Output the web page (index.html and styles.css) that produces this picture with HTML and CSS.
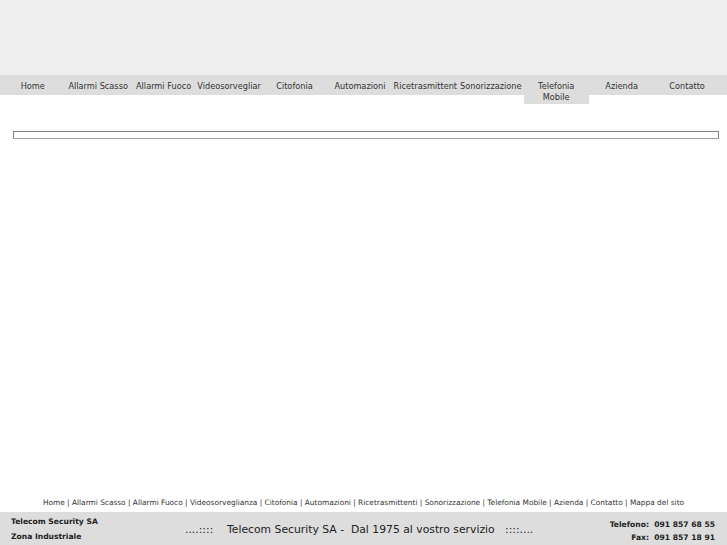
FILE: index.html
```html
<!DOCTYPE html>
<html lang="it">
<head>
  <meta charset="UTF-8">
  <title>Telecom Security SA</title>
  <link rel="stylesheet" href="styles.css">
</head>
<body>
  <div class="page">
    <div class="top"></div>

    <div class="menu-bar">
      <ul class="menu">
        <li><a href="#">Home</a></li>
        <li><a href="#">Allarmi Scasso</a></li>
        <li><a href="#">Allarmi Fuoco</a></li>
        <li><a href="#">Videosorvegliar</a></li>
        <li><a href="#">Citofonia</a></li>
        <li><a href="#">Automazioni</a></li>
        <li><a href="#">Ricetrasmittent</a></li>
        <li><a href="#">Sonorizzazione</a></li>
        <li class="active"><a href="#">Telefonia Mobile</a></li>
        <li><a href="#">Azienda</a></li>
        <li><a href="#">Contatto</a></li>
      </ul>
    </div>

    <div class="content">
      <div class="frame"></div>
    </div>

    <div class="links">
      <a href="#">Home</a> | <a href="#">Allarmi Scasso</a> | <a href="#">Allarmi Fuoco</a> | <a href="#">Videosorveglianza</a> | <a href="#">Citofonia</a> | <a href="#">Automazioni</a> | <a href="#">Ricetrasmittenti</a> | <a href="#">Sonorizzazione</a> | <a href="#">Telefonia Mobile</a> | <a href="#">Azienda</a> | <a href="#">Contatto</a> | <a href="#">Mappa del sito</a>
    </div>

    <div class="footer">
      <div class="address">
        <div>Telecom Security SA</div>
        <div>Zona Industriale</div>
      </div>
      <div class="slogan">....::::&nbsp;&nbsp;&nbsp; Telecom Security SA -&nbsp; Dal 1975 al vostro servizio &nbsp;&nbsp;::::....</div>
      <div class="phones">
        <div>Telefono:&nbsp; 091 857 68 55</div>
        <div>Fax:&nbsp; 091 857 18 91</div>
      </div>
    </div>
  </div>
</body>
</html>
```

FILE: styles.css
```css
body {
  margin: 0;
  font-family: 'DejaVu Sans', Verdana, sans-serif;
  background: #fff;
  color: #333;
}

a {
  color: #333;
  text-decoration: none;
}

.page {
  display: flex;
  flex-direction: column;
  min-height: 545px;
}

.top {
  height: 75px;
  background: #efefef;
}

.menu-bar {
  height: 20px;
  background: #dddddd;
}

.menu {
  display: grid;
  grid-template-columns: repeat(11, 65.45px);
  align-items: start;
  margin: 0;
  padding: 0;
  list-style: none;
  font-size: 8.2px;
}

.menu li {
  overflow: hidden;
  white-space: nowrap;
  text-align: center;
  line-height: 11px;
  padding: 6px 0 3px;
}

.menu li.active {
  white-space: normal;
  padding: 6px 10px 1px;
  background: #dddddd;
}

.content {
  flex: 1;
  padding: 36px 8px 0 13px;
}

.frame {
  height: 6px;
  border: 1px solid #808080;
  border-bottom-color: #a0a0a0;
}

.links {
  text-align: center;
  font-size: 7.4px;
  line-height: 10px;
  padding: 0 0 4px;
}

.footer {
  display: flex;
  align-items: center;
  height: 33px;
  background: #dddddd;
  padding: 0 12px 0 11px;
  font-size: 7.6px;
  font-weight: bold;
  color: #222;
}

.address {
  width: 174px;
}

.address div {
  line-height: 15px;
}

.slogan {
  flex: 1;
  font-size: 10.8px;
  font-weight: normal;
  padding-top: 1px;
}

.phones {
  text-align: right;
  padding-top: 4px;
}

.phones div {
  line-height: 13px;
}
```
